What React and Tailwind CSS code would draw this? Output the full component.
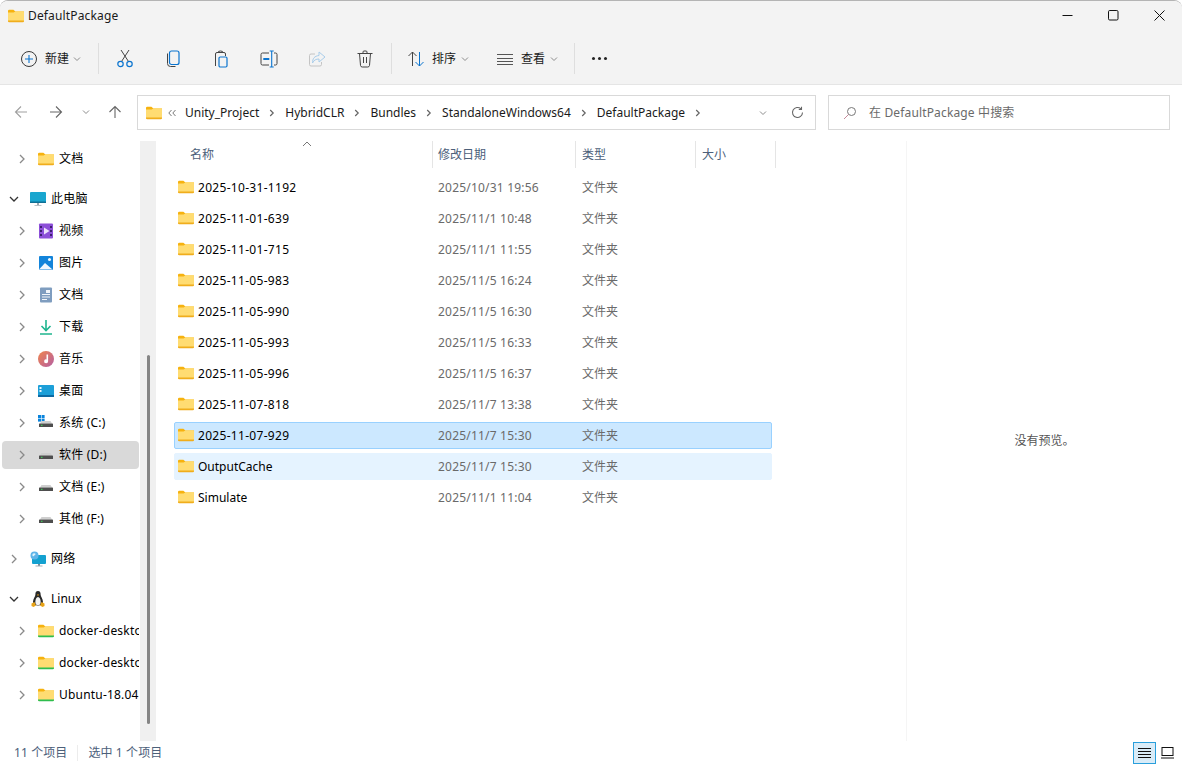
import React from 'react';

const FONT = { fontFamily: '"Noto Sans", "Noto Sans CJK SC", sans-serif' };

const Folder = ({ green = false, className = '' }) => (
  <svg viewBox="0 0 16 14" width="16" height="14" className={className}>
    <path d="M0 2a1.2 1.2 0 0 1 1.2-1.2h4.2l2 1.7H16v3H0z" fill="#f6b20f" />
    <path d="M0 3.6h5.6l2-1.4h7.2a1.2 1.2 0 0 1 1.2 1.2v8.4a1.2 1.2 0 0 1-1.2 1.2H1.2A1.2 1.2 0 0 1 0 11.8z" fill="#ffdc72" />
    <path d="M0 11.6h16v.4a1.2 1.2 0 0 1-1.2 1.2H1.2A1.2 1.2 0 0 1 0 12z" fill={green ? '#2ebd4e' : '#f0ad1c'} />
  </svg>
);

const Chevron = ({ open = false, className = '' }) => (
  <svg viewBox="0 0 10 10" width="10" height="10" className={className} fill="none" strokeWidth="1.3">
    {open ? (
      <path d="M1 3l4 4 4-4" stroke="#333" />
    ) : (
      <path d="M3 1l4 4-4 4" stroke="#8a8a8a" />
    )}
  </svg>
);

const SmallDown = ({ className = '' }) => (
  <svg viewBox="0 0 8 8" width="8" height="8" className={className} fill="none" stroke="#8c8c8c" strokeWidth="1">
    <path d="M1 2.5l3 3 3-3" />
  </svg>
);

const Crumb = () => (
  <svg viewBox="0 0 6 8" width="6" height="8" fill="none" stroke="#666" strokeWidth="1.2" className="mx-[10px] shrink-0">
    <path d="M1.2 1l3 3-3 3" />
  </svg>
);

const Sep = () => <div className="w-px h-[31px] bg-[#dedede] shrink-0" />;

const Icon = ({ children, w = 20, h = 20, className = '' }) => (
  <svg viewBox={`0 0 ${w} ${h}`} width={w} height={h} fill="none" className={className}>
    {children}
  </svg>
);

const Drive = ({ win = false }) => (
  <svg viewBox="0 0 16 16" width="16" height="16">
    {win && (
      <g fill="#0a84dc">
        <rect x="0" y="0" width="3" height="3" />
        <rect x="3.6" y="0" width="3" height="3" />
        <rect x="0" y="3.6" width="3" height="3" />
        <rect x="3.6" y="3.6" width="3" height="3" />
      </g>
    )}
    <path d="M2 8.5 3.5 6h9L14 8.500z" fill="#cfcfcf" />
    <rect x="1" y="8.500" width="14" height="3.500" rx="0.6" fill="#4e4e4e" />
    <rect x="3" y="9.800" width="1.500" height="1" fill="#3fe05a" />
  </svg>
);

const navIcons = {
  folder: <Folder />,
  wsl: <Folder green />,
  pc: (
    <svg viewBox="0 0 16 16" width="16" height="16">
      <rect x="0" y="1" width="16" height="11" rx="1" fill="#19a6cf" />
      <rect x="0" y="10.500" width="16" height="1.500" fill="#0f6f95" />
      <rect x="7" y="12" width="2" height="2" fill="#9aa5ad" />
      <rect x="4.500" y="14" width="7" height="1" fill="#b8c0c6" />
    </svg>
  ),
  video: (
    <svg viewBox="0 0 16 16" width="16" height="16">
      <rect x="1" y="0.500" width="14" height="15" rx="1" fill="#8c4fd8" />
      <g fill="#3d1f70">
        <rect x="2" y="3" width="2" height="2" />
        <rect x="2" y="7" width="2" height="2" />
        <rect x="2" y="11" width="2" height="2" />
        <rect x="12" y="3" width="2" height="2" />
        <rect x="12" y="7" width="2" height="2" />
        <rect x="12" y="11" width="2" height="2" />
      </g>
      <path d="M6 4.500v7l5.500-3.500z" fill="#ece2fb" />
    </svg>
  ),
  picture: (
    <svg viewBox="0 0 16 16" width="16" height="16">
      <rect x="1" y="1" width="14" height="14" rx="1" fill="#1384da" />
      <path d="M1 14.500 7 8l7.500 6.500z" fill="#f1f8fe" />
      <circle cx="11.500" cy="4.500" r="1.500" fill="#f1f8fe" />
    </svg>
  ),
  doc: (
    <svg viewBox="0 0 16 16" width="16" height="16">
      <rect x="2" y="0.500" width="12" height="15" rx="1" fill="#7f9dbf" />
      <g fill="#f2f6fa">
        <rect x="8" y="3" width="4" height="3" />
        <rect x="4" y="7" width="8" height="1" />
        <rect x="4" y="9.500" width="8" height="1" />
        <rect x="4" y="12" width="5" height="1" />
      </g>
    </svg>
  ),
  download: (
    <svg viewBox="0 0 16 16" width="16" height="16" fill="none" stroke="#1fb58f" strokeWidth="1.600">
      <path d="M8 1v10M3.500 7 8 11.500 12.500 7M2 15h12" />
    </svg>
  ),
  music: (
    <svg viewBox="0 0 16 16" width="16" height="16">
      <defs>
        <linearGradient id="mus" x1="0" y1="0" x2="1" y2="1">
          <stop offset="0" stopColor="#f0844c" />
          <stop offset="1" stopColor="#b45fa4" />
        </linearGradient>
      </defs>
      <circle cx="8" cy="8" r="8" fill="url(#mus)" />
      <path d="M8.500 3.500h1.600v6.800a2 2 0 1 1-1.600-1.900z" fill="#fff" />
    </svg>
  ),
  desktop: (
    <svg viewBox="0 0 16 16" width="16" height="16">
      <rect x="0" y="2" width="16" height="12" rx="1" fill="#1c9fd8" />
      <rect x="0" y="12" width="16" height="2" fill="#0d6aa3" />
      <rect x="1.500" y="4" width="2" height="2" fill="#e8f7ff" />
      <rect x="1.500" y="7" width="2" height="2" fill="#e8f7ff" />
    </svg>
  ),
  driveC: <Drive win />,
  drive: <Drive />,
  network: (
    <svg viewBox="0 0 16 16" width="16" height="16">
      <rect x="2" y="4" width="14" height="9" rx="1" fill="#14a1d0" />
      <rect x="8" y="13" width="2" height="2" fill="#7a8a96" />
      <rect x="5.500" y="14.500" width="7" height="1" fill="#a3afb8" />
      <circle cx="4.500" cy="4.500" r="4" fill="#5fb4e8" />
      <path d="M2.500 3c1-1.200 2.500-1 3-.2.400.800-.8 1.300-1.500 2-.6.600-1 .8-1.500 0z" fill="#dff2fb" />
    </svg>
  ),
  linux: (
    <svg viewBox="0 0 16 16" width="16" height="16">
      <path d="M8 0c-2 0-2.700 1.500-2.600 3.500C5.500 5.500 3 7.500 3 11c0 2 2 3.500 5 3.500s5-1.500 5-3.500c0-3.500-2.500-5.500-2.400-7.500C10.700 1.500 10 0 8 0z" fill="#2a2a2a" />
      <path d="M8 6c-1.600 0-2.700 2.500-2.700 5S6.500 14 8 14s2.700-.5 2.700-3S9.600 6 8 6z" fill="#f3f3f3" />
      <path d="M6.800 3.500h2.400L8 5z" fill="#e8a317" />
      <path d="M1.500 12.500 4.500 11l1.500 3.500-2.500 1.500-2-1zM14.500 12.500 11.500 11 10 14.500l2.500 1.500 2-1z" fill="#e8a317" />
    </svg>
  ),
};

const tree = [
  { label: '文档', icon: 'folder', level: 1 },
  { label: '此电脑', icon: 'pc', level: 0, open: true, gap: true },
  { label: '视频', icon: 'video', level: 1 },
  { label: '图片', icon: 'picture', level: 1 },
  { label: '文档', icon: 'doc', level: 1 },
  { label: '下载', icon: 'download', level: 1 },
  { label: '音乐', icon: 'music', level: 1 },
  { label: '桌面', icon: 'desktop', level: 1 },
  { label: '系统 (C:)', icon: 'driveC', level: 1 },
  { label: '软件 (D:)', icon: 'drive', level: 1, active: true },
  { label: '文档 (E:)', icon: 'drive', level: 1 },
  { label: '其他 (F:)', icon: 'drive', level: 1 },
  { label: '网络', icon: 'network', level: 0, gap: true },
  { label: 'Linux', icon: 'linux', level: 0, open: true, gap: true, tight: true },
  { label: 'docker-desktop', icon: 'wsl', level: 1 },
  { label: 'docker-desktop-data', icon: 'wsl', level: 1 },
  { label: 'Ubuntu-18.04', icon: 'wsl', level: 1 },
];

const files = [
  ['2025-10-31-1192', '2025/10/31 19:56'],
  ['2025-11-01-639', '2025/11/1 10:48'],
  ['2025-11-01-715', '2025/11/1 11:55'],
  ['2025-11-05-983', '2025/11/5 16:24'],
  ['2025-11-05-990', '2025/11/5 16:30'],
  ['2025-11-05-993', '2025/11/5 16:33'],
  ['2025-11-05-996', '2025/11/5 16:37'],
  ['2025-11-07-818', '2025/11/7 13:38'],
  ['2025-11-07-929', '2025/11/7 15:30', 'selected'],
  ['OutputCache', '2025/11/7 15:30', 'hover'],
  ['Simulate', '2025/11/1 11:04'],
];

const TreeRow = ({ item }) => (
  <div className={`h-8 flex items-center shrink-0 ${item.gap ? 'mt-2' : ''}`}>
    <div className={`h-7 w-[137px] ml-[2px] rounded flex items-center overflow-hidden ${item.active ? 'bg-[#d9d9d9]' : ''} ${item.level === 1 ? 'pl-[15px]' : 'pl-[7px]'}`}>
      <Chevron open={item.open} className="shrink-0" />
      <span className="ml-[11px] w-4 h-4 flex items-center justify-center shrink-0">{navIcons[item.icon]}</span>
      <span className={`ml-[5px] whitespace-nowrap text-xs text-black ${item.tight ? '' : 'tracking-[0.2px]'}`}>{item.label}</span>
    </div>
  </div>
);

const FileRow = ({ name, date, state }) => {
  const bg = state === 'selected'
    ? 'bg-[#cce8ff] border border-[#99d1ff]'
    : state === 'hover'
      ? 'bg-[#e5f3ff] border border-[#e5f3ff]'
      : 'border border-transparent';
  return (
    <div className={`h-[27px] w-[598px] ml-[17px] mb-1 rounded-[2px] grid grid-cols-[263px_144px_100px] items-center ${bg}`}>
      <div className="flex items-center pl-[3px]">
        <Folder className="-mt-[2px]" />
        <span className={`ml-1 text-xs text-black ${/^\d/.test(name) ? 'tracking-[0.3px]' : ''}`}>{name}</span>
      </div>
      <span className="text-xs tracking-[0.2px] text-[#6a6a6a]">{date}</span>
      <span className="text-xs text-[#6a6a6a]">文件夹</span>
    </div>
  );
};

export default function App() {
  return (
    <div style={FONT} className="w-[1182px] h-[764px] bg-white rounded-lg overflow-hidden flex flex-col border-t border-[#b4b4b4]">
      {/* title bar */}
      <div className="h-[29px] bg-[#f3f3f3] flex items-center pl-2 shrink-0">
        <Folder />
        <span className="ml-1 text-xs tracking-[0.15px] text-[#1a1a1a]">DefaultPackage</span>
        <div className="ml-auto flex items-center pr-[17px] gap-[35px]">
          <Icon w={11} h={11}><path d="M0.500 5.500h10" stroke="#111" /></Icon>
          <Icon w={11} h={11}><rect x="0.500" y="0.500" width="9.500" height="9.500" rx="1.200" stroke="#111" /></Icon>
          <Icon w={11} h={11}><path d="M0.500 0.500l10 10M10.500 0.500l-10 10" stroke="#111" /></Icon>
        </div>
      </div>

      {/* toolbar */}
      <div className="h-[55px] bg-[#f3f3f3] border-b border-[#e5e5e5] flex items-center shrink-0 pt-[3px]">
        <div className="flex items-center pl-[20px] w-[98px] shrink-0">
          <Icon w={18} h={18}>
            <circle cx="9" cy="9" r="7.500" stroke="#3a3a3a" />
            <path d="M9 5v8M5 9h8" stroke="#0a74cf" strokeWidth="1.100" />
          </Icon>
          <span className="ml-[7px] text-xs text-[#1a1a1a]">新建</span>
          <SmallDown className="ml-1" />
        </div>
        <Sep />
        <div className="flex items-center ml-4 gap-7">
          <Icon>
            <path d="M6 1l7.500 11.500M14 1 6.500 12.500" stroke="#444" />
            <circle cx="5.500" cy="15" r="2.700" stroke="#0a74cf" strokeWidth="1.200" />
            <circle cx="14.500" cy="15" r="2.700" stroke="#0a74cf" strokeWidth="1.200" />
          </Icon>
          <Icon>
            <path d="M4.500 4.500v10a3 3 0 0 0 3 3h5" stroke="#444" />
            <rect x="6.500" y="2" width="9.500" height="13.500" rx="2" stroke="#0a74cf" strokeWidth="1.200" />
          </Icon>
          <Icon>
            <path d="M4.500 17V5a1.500 1.500 0 0 1 1.500-1.500h7a1.500 1.500 0 0 1 1.500 1.500v2M7 3.500a2.500 1.500 0 0 1 5 0" stroke="#444" />
            <rect x="8" y="8" width="8" height="10" rx="1.200" stroke="#0a74cf" strokeWidth="1.200" />
          </Icon>
          <Icon>
            <path d="M10 4H3.500A1.500 1.500 0 0 0 2 5.500v9A1.500 1.500 0 0 0 3.500 16H10M15 4h1.500A1.500 1.500 0 0 1 18 5.500v9a1.500 1.500 0 0 1-1.500 1.500H15" stroke="#444" />
            <path d="M4.300 10h6" stroke="#0a74cf" strokeWidth="2" />
            <path d="M10.700 2h4M10.700 18h4M12.700 2v16" stroke="#0a74cf" strokeWidth="1.100" />
          </Icon>
          <Icon>
            <path d="M8 5H4a1.500 1.500 0 0 0-1.500 1.500v9A1.500 1.500 0 0 0 4 17h9a1.500 1.500 0 0 0 1.500-1.500V13" stroke="#c4c4c4" />
            <path d="M12 3l6 5-6 5v-3c-3 0-5 1-6.500 4 0-4.500 2-7 6.500-7.500z" stroke="#a9cdea" />
          </Icon>
          <Icon>
            <path d="M2.500 4.500h15M8 4.500V3a1 1 0 0 1 1-1h2a1 1 0 0 1 1 1v1.500M4.500 4.500l1 12a1.800 1.800 0 0 0 1.800 1.500h5.400a1.800 1.800 0 0 0 1.800-1.500l1-12M8.500 8v6M11.500 8v6" stroke="#444" />
          </Icon>
        </div>
        <div className="ml-4"><Sep /></div>
        <div className="flex items-center ml-[15px]">
          <Icon w={18} h={18}>
            <path d="M5.500 16V2M1.500 6l4-4 4 4" stroke="#444" />
            <path d="M12.500 2v14M8.500 12l4 4 4-4" stroke="#0a74cf" />
          </Icon>
          <span className="ml-[7px] text-xs text-[#1a1a1a]">排序</span>
          <SmallDown className="ml-[5px]" />
        </div>
        <div className="flex items-center ml-[28px]">
          <Icon w={17} h={14}>
            <path d="M0 2.500h16M0 6.500h16M0 9.500h16M0 12.500h16" stroke="#555" />
          </Icon>
          <span className="ml-[7px] text-xs text-[#1a1a1a]">查看</span>
          <SmallDown className="ml-[5px]" />
        </div>
        <div className="ml-4"><Sep /></div>
        <div className="flex items-center gap-[3px] ml-[17px]">
          <span className="w-[3px] h-[3px] rounded-full bg-[#222]" />
          <span className="w-[3px] h-[3px] rounded-full bg-[#222]" />
          <span className="w-[3px] h-[3px] rounded-full bg-[#222]" />
        </div>
      </div>

      {/* nav bar */}
      <div className="h-[46px] pt-[10px] flex shrink-0 bg-white">
        <div className="w-[137px] h-[34px] flex items-center shrink-0 pl-[14px]">
          <Icon w={14} h={14}><path d="M13 7H1.500M7 1.500 1.500 7 7 12.500" stroke="#a0a0a0" strokeWidth="1.100" /></Icon>
          <Icon w={14} h={14} className="ml-[21px]"><path d="M1 7h11.500M7 1.500 12.500 7 7 12.500" stroke="#666" strokeWidth="1.100" /></Icon>
          <SmallDown className="ml-[19px]" />
          <Icon w={14} h={14} className="ml-[18px]"><path d="M7 13V1.500M1.500 7 7 1.500 12.500 7" stroke="#666" strokeWidth="1.100" /></Icon>
        </div>
        <div className="w-[679px] h-[35px] border border-[#d9d9d9] flex items-center pl-2 shrink-0">
          <Folder />
          <svg viewBox="0 0 8 8" width="8" height="8" fill="none" stroke="#777" strokeWidth="1" className="ml-[6px]">
            <path d="M3.500 1 .8 4l2.700 3M7.500 1 4.800 4l2.700 3" />
          </svg>
          <span className="ml-[9px] text-xs text-[#1a1a1a]">Unity_Project</span>
          <Crumb />
          <span className="text-xs text-[#1a1a1a]">HybridCLR</span>
          <Crumb />
          <span className="text-xs text-[#1a1a1a]">Bundles</span>
          <Crumb />
          <span className="text-xs text-[#1a1a1a]">StandaloneWindows64</span>
          <Crumb />
          <span className="text-xs text-[#1a1a1a]">DefaultPackage</span>
          <Crumb />
          <div className="ml-auto flex items-center pr-[11px] gap-[24px]">
            <SmallDown />
            <Icon w={13} h={13}>
              <path d="M11.500 6.500a5 5 0 1 1-1.600-3.700M10.500 .8v2.700H7.800" stroke="#666" strokeWidth="1.100" />
            </Icon>
          </div>
        </div>
        <div className="w-[342px] h-[35px] ml-[12px] border border-[#d9d9d9] flex items-center pl-[14px] shrink-0">
          <Icon w={14} h={14}>
            <circle cx="8.500" cy="5.500" r="4" stroke="#777" />
            <path d="M5.500 8.500 1 13" stroke="#c58a9a" />
          </Icon>
          <span className="ml-[12px] text-xs tracking-[0.15px] text-[#6a6a6a]">在 DefaultPackage 中搜索</span>
        </div>
      </div>

      {/* body */}
      <div className="flex-1 min-h-0 flex pt-[10px]">
        <div className="w-[140px] shrink-0 flex flex-col pt-[2px]">
          {tree.map((item, i) => <TreeRow key={i} item={item} />)}
        </div>
        <div className="w-4 shrink-0 bg-[#f0f0f0] pt-[214px]">
          <div className="w-[3px] h-[369px] ml-[7px] rounded-full bg-[#858585]" />
        </div>
        <div className="w-[750px] shrink-0 border-r border-[#f5f5f5] ml-px">
          <div className="h-[27px] grid grid-cols-[276px_143px_120px_80px] mb-[6px]">
            <div className="relative border-r border-[#e5e5e5] pl-[33px] flex items-center">
              <span className="text-xs text-[#4c607a]">名称</span>
              <svg viewBox="0 0 10 6" width="10" height="6" fill="none" stroke="#777" className="absolute left-[145px] top-0">
                <path d="M1 5l4-4 4 4" />
              </svg>
            </div>
            <div className="border-r border-[#e5e5e5] pl-[5px] flex items-center text-xs text-[#4c607a]">修改日期</div>
            <div className="border-r border-[#e5e5e5] pl-[6px] flex items-center text-xs text-[#4c607a]">类型</div>
            <div className="border-r border-[#e5e5e5] pl-[6px] flex items-center text-xs text-[#4c607a]">大小</div>
          </div>
          {files.map(([name, date, state]) => (
            <FileRow key={name} name={name} date={date} state={state} />
          ))}
        </div>
        <div className="flex-1 flex items-start justify-center pt-[292px]">
          <span className="text-xs text-[#555]">没有预览。</span>
        </div>
      </div>

      {/* status bar */}
      <div className="h-[23px] shrink-0 flex items-center pl-[14px] pr-[6px]">
        <span className="text-xs tracking-[0.1px] text-[#4c607a]">11 个项目</span>
        <div className="w-px h-4 bg-[#ececec] ml-[10px] mr-[10px]" />
        <span className="text-xs tracking-[0.1px] text-[#4c607a]">选中 1 个项目</span>
        <div className="ml-auto flex items-center gap-[2px]">
          <div className="w-[23px] h-[22px] bg-[#d9ecf8] border border-[#2a9fdc] flex items-center justify-center">
            <Icon w={13} h={12}><path d="M0 1.500h13M0 4.500h13M0 7.500h13M0 10.500h13" stroke="#111" /></Icon>
          </div>
          <div className="w-[18px] h-[22px] flex items-center justify-center">
            <Icon w={13} h={12}>
              <rect x="1" y="0.500" width="11" height="8" stroke="#111" />
              <path d="M0 11h13" stroke="#111" />
            </Icon>
          </div>
        </div>
      </div>
    </div>
  );
}
